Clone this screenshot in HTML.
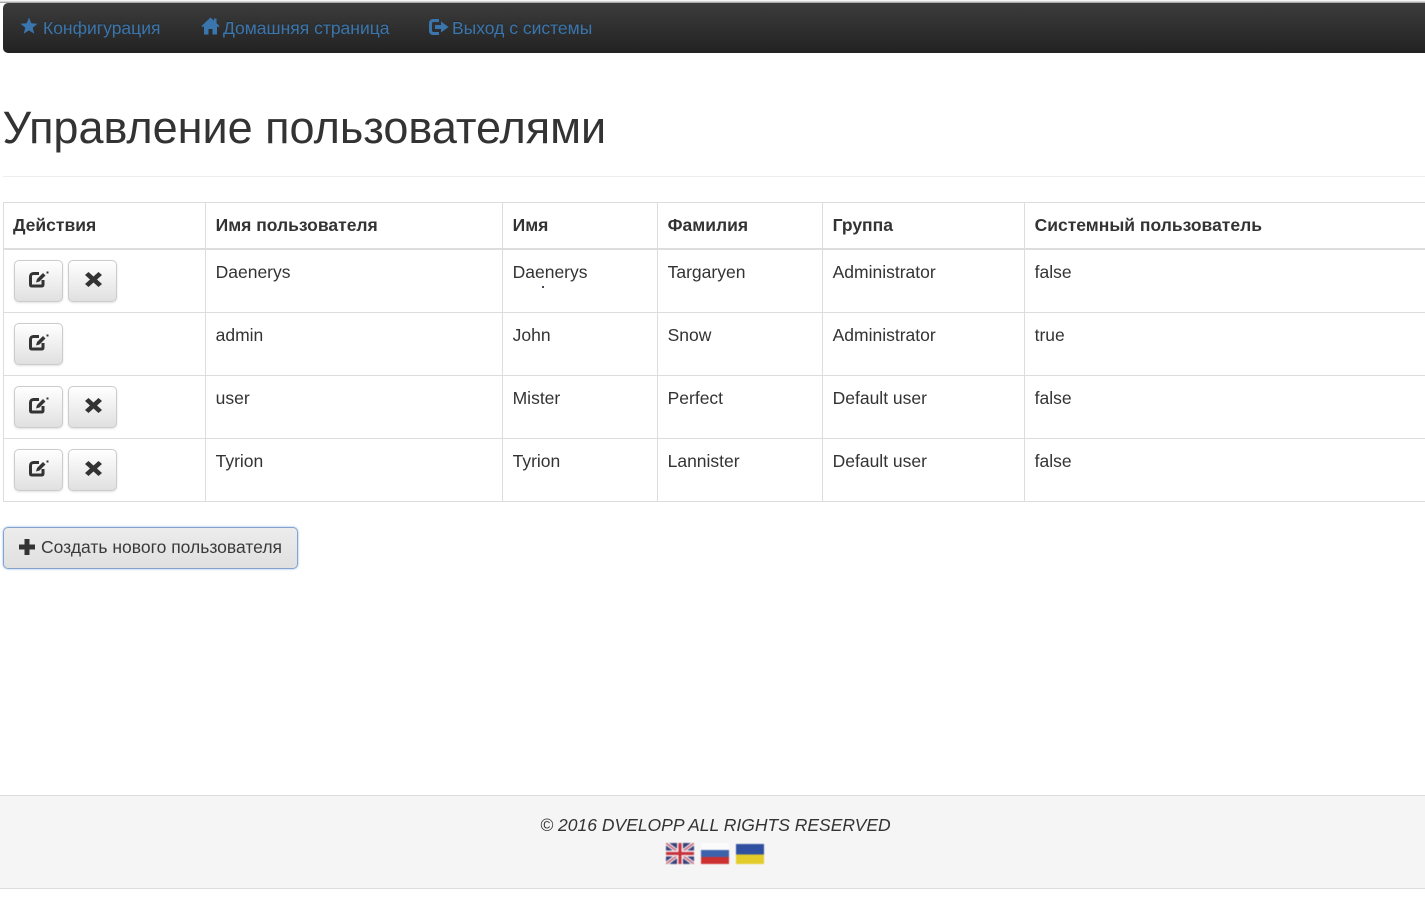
<!DOCTYPE html>
<html><head><meta charset="utf-8"><style>
html,body{margin:0;padding:0;background:#fff}
body{width:1425px;height:899px;position:relative;overflow:hidden;font-family:"Liberation Sans",sans-serif;font-size:17.5px;color:#333}
.a{position:absolute;white-space:nowrap}
.top{left:0;top:0;width:1425px;height:3px;background:linear-gradient(#f4f4f4,#f4f4f4 1px,#bbb 2px,#999)}
.nav{left:3px;top:3px;width:1430px;height:50px;border-radius:5px;background:linear-gradient(#3c3c3c,#222)}
.l{color:#3a76ad;top:16px;line-height:24px;text-shadow:0 -1px 0 rgba(0,0,0,.25)}
.i{position:absolute;fill:#3a76ad}
h1{margin:0;font-weight:400;font-size:45px;line-height:50px;left:2.5px;top:103px;position:absolute;color:#333;white-space:nowrap}
.hr{left:3px;top:176px;width:1422px;height:1px;background:#eee}
.h{background:#ddd}
.t{font-weight:700;line-height:24px;margin-left:-.4px}
.c{line-height:24px;margin-left:-.4px;margin-top:-.4px}
.b{width:47px;height:40px;border:1px solid #ccc;border-radius:5px;background:linear-gradient(#fff,#e0e0e0);box-shadow:0 1px 2px rgba(0,0,0,.12);box-sizing:content-box}
.b svg{position:absolute}
.cr{left:3px;top:527px;width:293px;height:40px;border:1px solid #84a4cf;border-radius:5px;background:linear-gradient(#ececec,#e0e0e0);box-shadow:0 0 2px rgba(102,150,210,.7)}
.f{left:0;top:795px;width:1425px;height:92px;background:#f5f5f5;border-top:1px solid #ddd;border-bottom:1px solid #ddd}
.ft{left:0;width:1431px;text-align:center;top:813px;line-height:24px;font-style:italic}
.fl{filter:blur(.5px)}
</style></head><body>
<div class="a top"></div>
<div class="a nav"></div>
<svg class="i" style="left:20px;top:17px" width="18" height="18" viewBox="0 0 18 18"><path d="M9 0.500l2.300 5.800 6.200.4-4.800 4 1.600 6.100L9 13.400l-5.300 3.400 1.600-6.100-4.800-4 6.200-.4z"/></svg>
<div class="a l" style="left:43px">Конфигурация</div>
<svg class="i" style="left:201px;top:17px" width="19" height="18" viewBox="0 0 19 18"><path d="M9.500 0.500L0.500 9l1.200 1.200 1.300-1V17.500h4.500V12h4v5.500H16V9.200l1.300 1 1.200-1.200-3-2.800V1.500h-2.500v2.300z"/></svg>
<div class="a l" style="left:223px">Домашняя страница</div>
<svg class="i" style="left:429px;top:18px" width="20" height="18" viewBox="0 0 20 18"><path d="M4 1h6v3H4.500C3.700 4 3 4.700 3 5.500v7c0 .8.700 1.500 1.500 1.500H10v3H4c-2 0-4-1.800-4-4V5C0 2.800 2 1 4 1zM12 3.500L19.500 9 12 14.500V11H6V7h6z"/></svg>
<div class="a l" style="left:452px">Выход с системы</div>

<h1>Управление пользователями</h1>
<div class="a hr"></div>

<div class="a h" style="left:3px;top:202px;width:1422px;height:1px"></div>
<div class="a h" style="left:3px;top:248px;width:1422px;height:2px"></div>
<div class="a h" style="left:3px;top:312px;width:1422px;height:1px"></div>
<div class="a h" style="left:3px;top:375px;width:1422px;height:1px"></div>
<div class="a h" style="left:3px;top:438px;width:1422px;height:1px"></div>
<div class="a h" style="left:3px;top:501px;width:1422px;height:1px"></div>
<div class="a h" style="left:3px;top:202px;width:1px;height:300px"></div>
<div class="a h" style="left:205px;top:202px;width:1px;height:300px"></div>
<div class="a h" style="left:502px;top:202px;width:1px;height:300px"></div>
<div class="a h" style="left:657px;top:202px;width:1px;height:300px"></div>
<div class="a h" style="left:822px;top:202px;width:1px;height:300px"></div>
<div class="a h" style="left:1024px;top:202px;width:1px;height:300px"></div>

<div class="a t" style="left:13.400px;top:213px">Действия</div>
<div class="a t" style="left:216px;top:213px">Имя пользователя</div>
<div class="a t" style="left:513px;top:213px">Имя</div>
<div class="a t" style="left:668px;top:213px">Фамилия</div>
<div class="a t" style="left:833px;top:213px">Группа</div>
<div class="a t" style="left:1035px;top:213px">Системный пользователь</div>

<div class="a c" style="left:216px;top:260px">Daenerys</div>
<div class="a c" style="left:513px;top:260px">Daenerys</div>
<div class="a" style="left:542px;top:286px;width:2px;height:2px;background:#445"></div>
<div class="a c" style="left:668px;top:260px">Targaryen</div>
<div class="a c" style="left:833px;top:260px">Administrator</div>
<div class="a c" style="left:1035px;top:260px">false</div>

<div class="a c" style="left:216px;top:323px">admin</div>
<div class="a c" style="left:513px;top:323px">John</div>
<div class="a c" style="left:668px;top:323px">Snow</div>
<div class="a c" style="left:833px;top:323px">Administrator</div>
<div class="a c" style="left:1035px;top:323px">true</div>

<div class="a c" style="left:216px;top:386px">user</div>
<div class="a c" style="left:513px;top:386px">Mister</div>
<div class="a c" style="left:668px;top:386px">Perfect</div>
<div class="a c" style="left:833px;top:386px">Default user</div>
<div class="a c" style="left:1035px;top:386px">false</div>

<div class="a c" style="left:216px;top:449px">Tyrion</div>
<div class="a c" style="left:513px;top:449px">Tyrion</div>
<div class="a c" style="left:668px;top:449px">Lannister</div>
<div class="a c" style="left:833px;top:449px">Default user</div>
<div class="a c" style="left:1035px;top:449px">false</div>

<div class="a b" style="left:14px;top:260px"><svg style="left:14px;top:10px" width="20" height="17" viewBox="0 0 20 17"><path d="M10 2.500H4.500C2.800 2.500 1.500 3.800 1.500 5.500v8c0 1 .5 1.500 1.500 1.500h9.500c1 0 1.500-.5 1.500-1.500V9" fill="none" stroke="#333" stroke-width="3"/><path d="M7 11.500l1-3.500 6-6 2.500 2.500-6 6z" fill="#333"/><rect x="17.500" y="0.500" width="2" height="2" fill="#333"/></svg></div>
<div class="a b" style="left:68px;top:260px"><svg style="left:16px;top:11px" width="17" height="15" viewBox="0 0 17 15"><path d="M3.500 0L8.500 4.500 13.500 0 17 3 12 7.500 17 12 13.500 15 8.500 10.500 3.500 15 0 12 5 7.500 0 3z" fill="#333"/></svg></div>
<div class="a b" style="left:14px;top:323px"><svg style="left:14px;top:10px" width="20" height="17" viewBox="0 0 20 17"><path d="M10 2.500H4.500C2.800 2.500 1.500 3.800 1.500 5.500v8c0 1 .5 1.500 1.500 1.500h9.500c1 0 1.500-.5 1.500-1.500V9" fill="none" stroke="#333" stroke-width="3"/><path d="M7 11.500l1-3.500 6-6 2.500 2.500-6 6z" fill="#333"/><rect x="17.500" y="0.500" width="2" height="2" fill="#333"/></svg></div>
<div class="a b" style="left:14px;top:386px"><svg style="left:14px;top:10px" width="20" height="17" viewBox="0 0 20 17"><path d="M10 2.500H4.500C2.800 2.500 1.500 3.800 1.500 5.500v8c0 1 .5 1.500 1.500 1.500h9.500c1 0 1.500-.5 1.500-1.500V9" fill="none" stroke="#333" stroke-width="3"/><path d="M7 11.500l1-3.500 6-6 2.500 2.500-6 6z" fill="#333"/><rect x="17.500" y="0.500" width="2" height="2" fill="#333"/></svg></div>
<div class="a b" style="left:68px;top:386px"><svg style="left:16px;top:11px" width="17" height="15" viewBox="0 0 17 15"><path d="M3.500 0L8.500 4.500 13.500 0 17 3 12 7.500 17 12 13.500 15 8.500 10.500 3.500 15 0 12 5 7.500 0 3z" fill="#333"/></svg></div>
<div class="a b" style="left:14px;top:449px"><svg style="left:14px;top:10px" width="20" height="17" viewBox="0 0 20 17"><path d="M10 2.500H4.500C2.800 2.500 1.500 3.800 1.500 5.500v8c0 1 .5 1.500 1.500 1.500h9.500c1 0 1.500-.5 1.500-1.500V9" fill="none" stroke="#333" stroke-width="3"/><path d="M7 11.500l1-3.500 6-6 2.500 2.500-6 6z" fill="#333"/><rect x="17.500" y="0.500" width="2" height="2" fill="#333"/></svg></div>
<div class="a b" style="left:68px;top:449px"><svg style="left:16px;top:11px" width="17" height="15" viewBox="0 0 17 15"><path d="M3.500 0L8.500 4.500 13.500 0 17 3 12 7.500 17 12 13.500 15 8.500 10.500 3.500 15 0 12 5 7.500 0 3z" fill="#333"/></svg></div>

<div class="a cr"></div>
<svg class="a" style="left:19px;top:539px;fill:#333" width="16" height="16" viewBox="0 0 16 16"><path d="M5.500 0h5v5.500H16v5h-5.500V16h-5v-5.500H0v-5h5.500z"/></svg>
<div class="a c" style="left:41.400px;top:535px;font-size:17.500px;color:#3a3a3a">Создать нового пользователя</div>

<div class="a f"></div>
<div class="a ft">© 2016 DVELOPP ALL RIGHTS RESERVED</div>

<svg class="a fl" style="left:666px;top:843px" width="28" height="21" viewBox="0 0 28 21"><rect width="28" height="21" fill="#3b3f78"/><path d="M0 0L28 21M28 0L0 21" stroke="#e8e4ea" stroke-width="4"/><path d="M0 0L28 21M28 0L0 21" stroke="#c85a6a" stroke-width="1.300"/><path d="M14 0V21M0 10.500H28" stroke="#f0ecee" stroke-width="6"/><path d="M14 0V21M0 10.500H28" stroke="#c8323c" stroke-width="3"/></svg>
<svg class="a fl" style="left:701px;top:843px" width="28" height="21" viewBox="0 0 28 21"><rect width="28" height="7" fill="#fbfbfb"/><rect y="7" width="28" height="7" fill="#3d62ac"/><rect y="14" width="28" height="7" fill="#cc3030"/></svg>
<svg class="a fl" style="left:736px;top:843.500px" width="28" height="20" viewBox="0 0 28 20"><rect width="28" height="10.500" fill="#2f50a0"/><rect y="10.500" width="28" height="9.500" fill="#e3cb2a"/></svg>
</body></html>
